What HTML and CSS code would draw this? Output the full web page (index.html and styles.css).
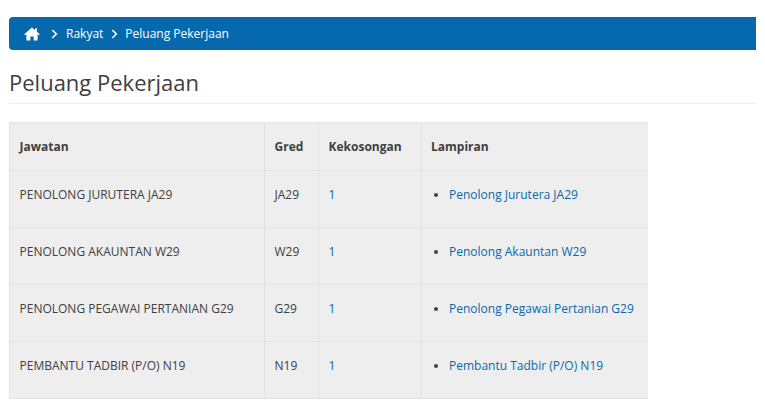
FILE: index.html
```html
<!DOCTYPE html>
<html lang="ms">
<head>
<meta charset="utf-8">
<title>Peluang Pekerjaan</title>
<link rel="stylesheet" href="styles.css">
</head>
<body>
<nav class="crumbs">
  <a class="crumb home" href="#" aria-label="Home"><svg class="home-icon" viewBox="0 0 16 14" width="16" height="14"><path fill="#fff" d="M8 0.5 L11.2 3.2 V1.2 H13 V4.8 L15.8 7.2 L14.9 8.2 L13.6 7.1 V13.6 H9.6 V9.6 H6.4 V13.6 H2.4 V7.1 L1.1 8.2 L0.2 7.2 Z"/></svg></a>
  <svg class="sep" viewBox="0 0 7 10" width="7" height="10"><path d="M1.3 1 L5.3 5 L1.3 9" fill="none" stroke="#fff" stroke-width="1.6"/></svg>
  <a class="crumb" href="#">Rakyat</a>
  <svg class="sep" viewBox="0 0 7 10" width="7" height="10"><path d="M1.3 1 L5.3 5 L1.3 9" fill="none" stroke="#fff" stroke-width="1.6"/></svg>
  <a class="crumb" href="#">Peluang Pekerjaan</a>
</nav>
<h1 class="title">Peluang Pekerjaan</h1>
<table class="jobs">
  <colgroup><col class="c1"><col class="c2"><col class="c3"><col class="c4"></colgroup>
  <thead>
    <tr><th>Jawatan</th><th>Gred</th><th>Kekosongan</th><th>Lampiran</th></tr>
  </thead>
  <tbody>
    <tr><td>PENOLONG JURUTERA JA29</td><td>JA29</td><td class="count">1</td><td><ul><li><a href="#">Penolong Jurutera JA29</a></li></ul></td></tr>
    <tr><td>PENOLONG AKAUNTAN W29</td><td>W29</td><td class="count">1</td><td><ul><li><a href="#">Penolong Akauntan W29</a></li></ul></td></tr>
    <tr><td>PENOLONG PEGAWAI PERTANIAN G29</td><td>G29</td><td class="count">1</td><td><ul><li><a href="#">Penolong Pegawai Pertanian G29</a></li></ul></td></tr>
    <tr><td>PEMBANTU TADBIR (P/O) N19</td><td>N19</td><td class="count">1</td><td><ul><li><a href="#">Pembantu Tadbir (P/O) N19</a></li></ul></td></tr>
  </tbody>
</table>
</body>
</html>
```
FILE: styles.css
```css
* { box-sizing: border-box; }
html, body { overflow: hidden; }
body {
  margin: 0;
  padding: 17px 9px 0;
  height: 400px;
  background: #fff;
  color: #404040;
  font-family: "Open Sans", sans-serif;
  font-size: 12px;
  line-height: 17px;
}
a { color: #0769ad; text-decoration: none; }
.crumbs {
  display: flex;
  align-items: center;
  height: 33px;
  padding-left: 15px;
  background: #0769ad;
  border-radius: 4px 0 0 4px;
}
.crumb { color: #fff; }
.home { display: flex; margin-right: 11px; }
.sep { margin: 1px 7px 0 8px; flex: none; }
.sep:first-of-type { margin-left: 0; margin-right: 8px; }
.title {
  margin: 17px 0 18px;
  padding-bottom: 4px;
  height: 37px;
  border-bottom: 1px solid #eee;
  font-size: 22px;
  font-weight: 400;
  line-height: 30px;
  color: #404040;
}
.jobs {
  width: 638px;
  table-layout: fixed;
  border-collapse: collapse;
  background: #eee;
}
.c1 { width: 255px; }
.c2 { width: 54px; }
.c3 { width: 103px; }
.c4 { width: 226px; }
th, td {
  border: 1px solid #e3e3e3;
  padding: 0 9.5px;
  text-align: left;
  vertical-align: middle;
}
th { height: 48px; font-weight: 700; }
th:last-child, td:last-child { padding-left: 9px; border-right: 0; }
td { height: 57px; padding-bottom: 10px; }
.count { color: #0769ad; }
ul { margin: 0; padding: 0 0 0 18px; }
```
